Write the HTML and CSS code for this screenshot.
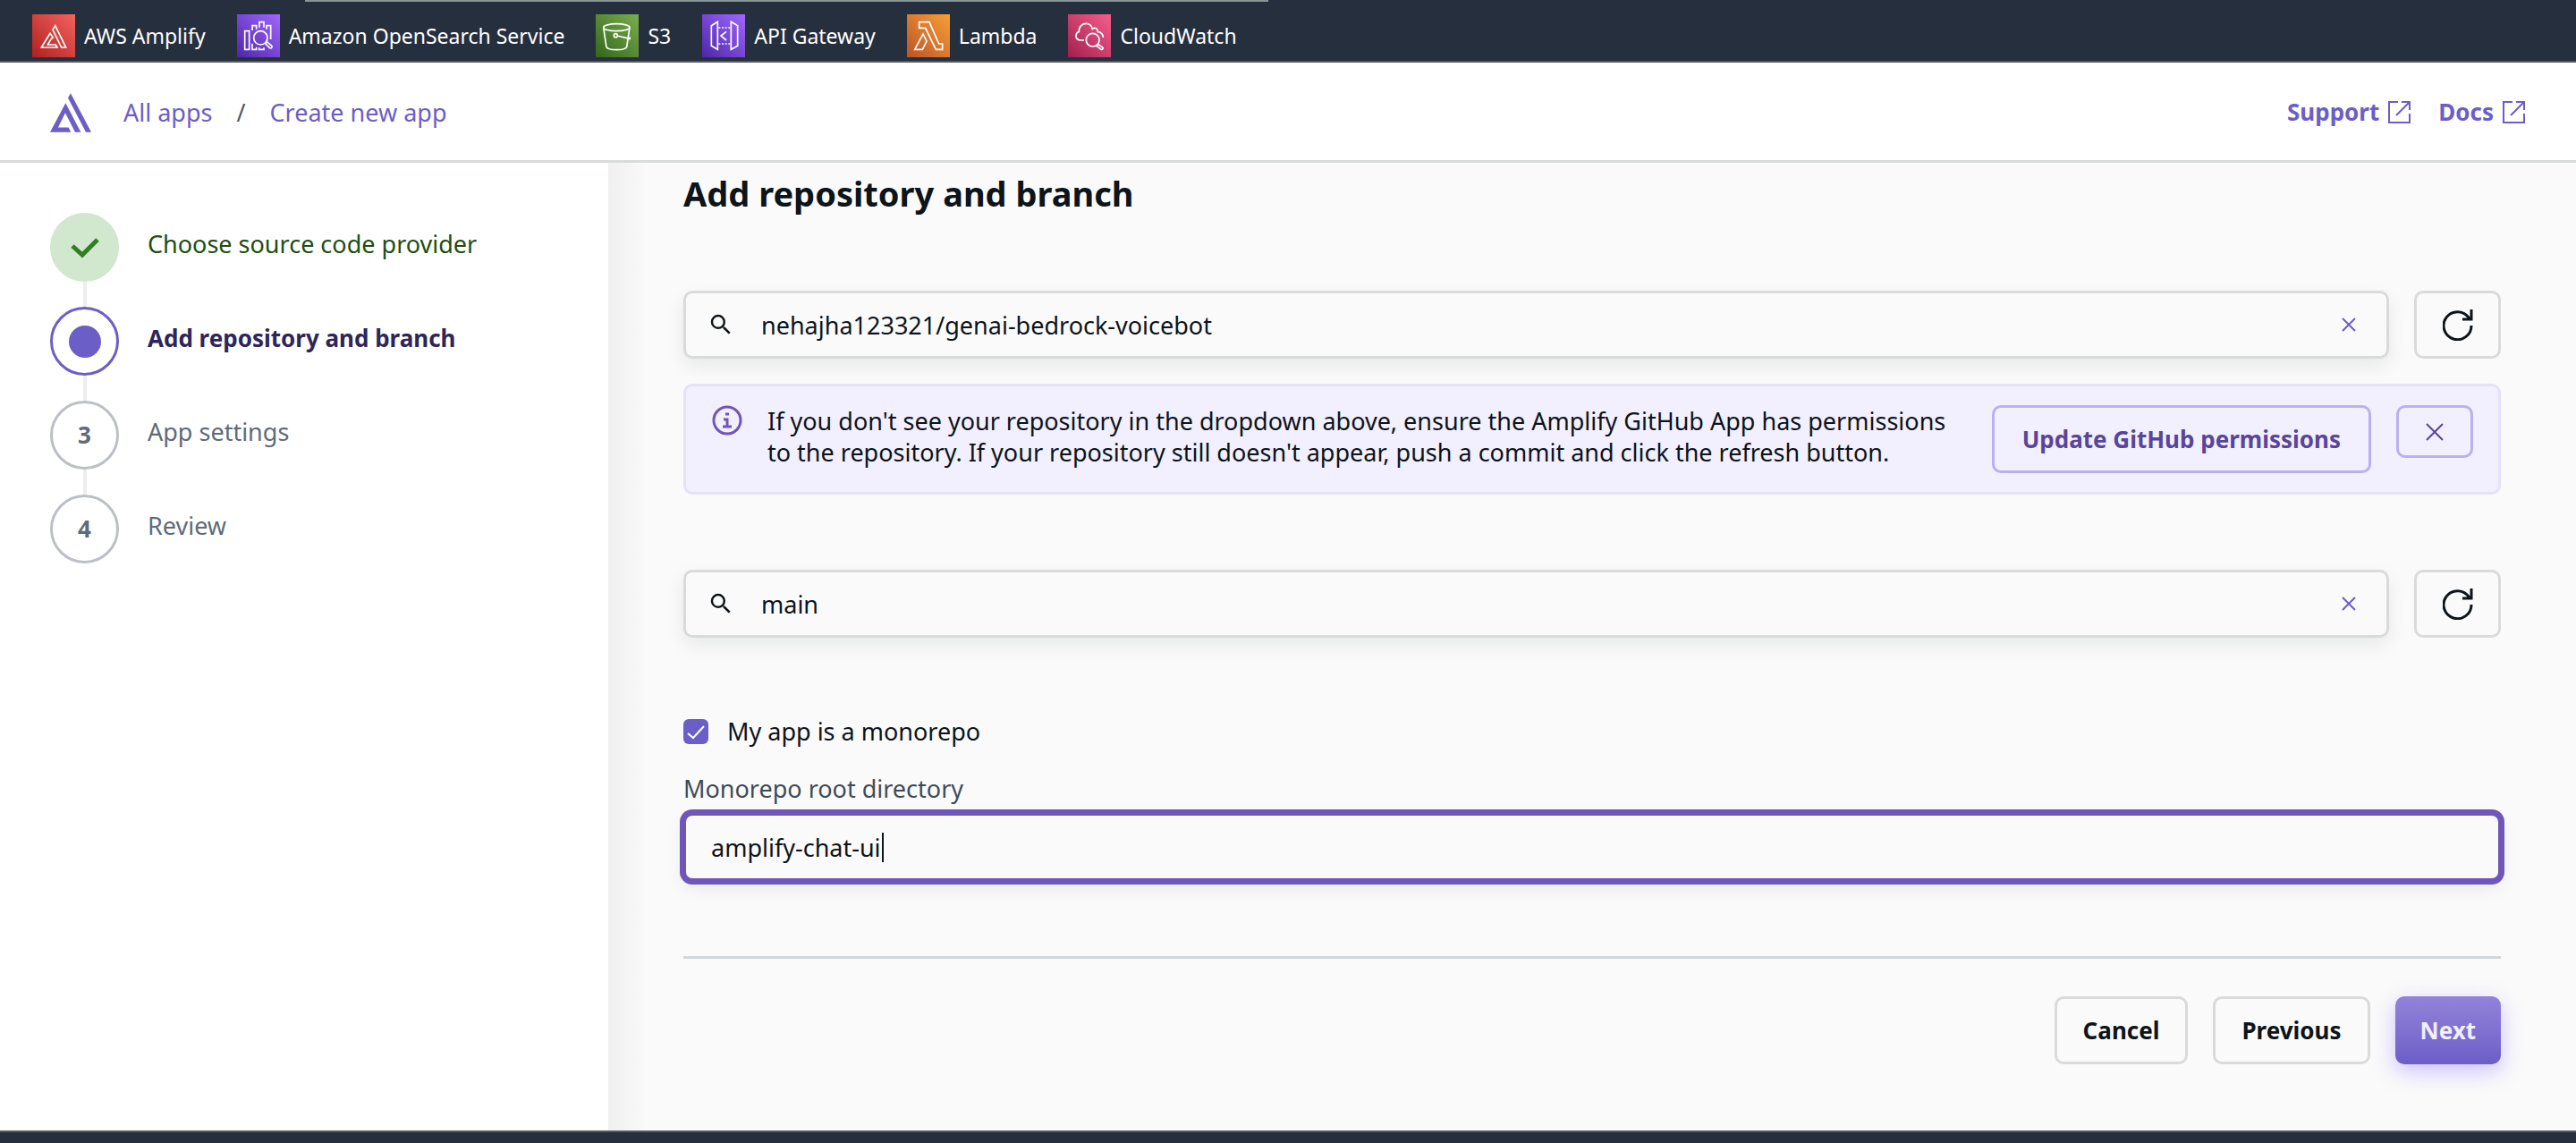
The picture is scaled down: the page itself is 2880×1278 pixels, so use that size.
FILE: index.html
```html
<!DOCTYPE html>
<html lang="en">
<head>
<meta charset="utf-8">
<title>Create new app</title>
<meta name="viewport" content="width=device-width, initial-scale=1">
<link rel="stylesheet" href="styles.css">
</head>
<body>
<nav class="services" aria-label="Favorite services">
  <span class="services-edge"></span>
  <a class="service" href="#">
    <svg class="service-icon red" viewBox="0 0 144 144"><path d="M77 38L113 111H98L69 52Z"/><path d="M31 111L60 64L70 78L64 82L52 102H79L84 111Z"/></svg>
    AWS Amplify
  </a>
  <a class="service" href="#">
    <svg class="service-icon purple" viewBox="0 0 144 144"><path d="M26 56H41V118H26ZM51 54V38H65V50M75 44V26H90V44M99 50V38H113V84M51 98V118H65V110M74 112V118H90V112"/><circle cx="79" cy="79" r="23"/><path d="M95 98L100 92L116 105Q119 109 116 112T109 112Z"/></svg>
    Amazon OpenSearch Service
  </a>
  <a class="service" href="#">
    <svg class="service-icon green" viewBox="0 0 144 144"><ellipse cx="70" cy="44" rx="44" ry="12"/><path d="M26 44L36 110C42 122 98 122 104 110L114 44M73 72L114 82"/><circle cx="67" cy="71" r="6"/><path d="M108 79L117 82" stroke-width="8"/></svg>
    S3
  </a>
  <a class="service" href="#">
    <svg class="service-icon purple" viewBox="0 0 144 144"><path d="M31 38L52 25V118L31 106ZM119 38L97 25V118L119 106ZM81 58L63 72L81 87"/><path d="M55 45H95M55 99H95" stroke-dasharray="6 5"/></svg>
    API Gateway
  </a>
  <a class="service" href="#">
    <svg class="service-icon orange" viewBox="0 0 144 144"><path d="M41 26H75L107 99H119V118H97L62 46H41ZM26 118L54 66L66 90L52 118Z"/></svg>
    Lambda
  </a>
  <a class="service" href="#">
    <svg class="service-icon pink" viewBox="0 0 144 144"><path d="M54 87H44C31 87 26 79 27 71C28 63 33 59 37 58C36 40 49 31 61 31C72 31 79 38 82 49C89 43 99 46 100 58C111 60 118 67 118 78"/><circle cx="83" cy="86" r="22"/><path d="M96 106L101 100L117 112Q119 115 116 117T111 118Z"/></svg>
    CloudWatch
  </a>
</nav>

<header class="header">
  <a class="logo" href="#" aria-label="AWS Amplify home">
    <svg width="46" height="44" viewBox="108 309 138 131"><path d="M177 309L246 440H228L168 325ZM160 342L211 440H192L159 375L135 424H170L178 440H108Z"/></svg>
  </a>
  <nav class="crumbs" aria-label="Breadcrumb">
    <a href="#">All apps</a>
    <span class="slash">/</span>
    <a href="#">Create new app</a>
  </nav>
  <div class="help">
    <a href="#">Support <svg class="external" viewBox="0 0 25 25"><path d="M11 1H1V24H24V14M15 1H24V10M9 16L24 1"/></svg></a>
    <a href="#">Docs <svg class="external" viewBox="0 0 25 25"><path d="M11 1H1V24H24V14M15 1H24V10M9 16L24 1"/></svg></a>
  </div>
</header>

<div class="body">
  <aside class="sidebar">
    <ol class="steps">
      <li class="step done">
        <span class="marker"><svg width="32" height="24" viewBox="0 0 32 24"><path d="M2 10L13 20L30 3"/></svg></span>
        <span class="step-label">Choose source code provider</span>
      </li>
      <li class="step current" aria-current="step">
        <span class="marker"><span class="dot"></span></span>
        <span class="step-label">Add repository and branch</span>
      </li>
      <li class="step">
        <span class="marker">3</span>
        <span class="step-label">App settings</span>
      </li>
      <li class="step">
        <span class="marker">4</span>
        <span class="step-label">Review</span>
      </li>
    </ol>
  </aside>

  <main class="main">
    <h1>Add repository and branch</h1>
    <form>
      <div class="picker">
        <div class="search">
          <svg class="search-icon" viewBox="0 0 24 24"><path d="M15.5 14h-.79l-.28-.27A6.47 6.47 0 0 0 16 9.500 6.500 6.500 0 1 0 9.500 16c1.610 0 3.090-.59 4.230-1.570l.27.28v.79l5 4.990L20.490 19l-4.990-5zm-6 0C7.010 14 5 11.990 5 9.500S7.010 5 9.500 5 14 7.010 14 9.500 11.990 14 9.500 14z"/></svg>
          <input type="text" aria-label="Repository" value="nehajha123321/genai-bedrock-voicebot">
          <button type="button" class="clear" aria-label="Clear repository"><svg width="16" height="16" viewBox="0 0 16 16"><path d="M1 1L15 15M15 1L1 15"/></svg></button>
        </div>
        <button type="button" class="button refresh" aria-label="Refresh repositories"><svg width="34" height="35" viewBox="0 0 34 35"><path d="M32 18A15.500 15.500 0 1 1 29 9L31 11M32 0V11H22"/></svg></button>
      </div>

      <div class="alert" role="status">
        <svg class="info" viewBox="0 0 34 34"><circle cx="17" cy="17" r="15"/><path d="M15 10H19M13 16H17V24M12 24H22"/></svg>
        <p>If you don't see your repository in the dropdown above, ensure the Amplify GitHub App has permissions to the repository. If your repository still doesn't appear, push a commit and click the refresh button.</p>
        <button type="button" class="button tinted">Update GitHub permissions</button>
        <button type="button" class="button tinted dismiss" aria-label="Dismiss"><svg width="20" height="20" viewBox="0 0 20 20"><path d="M1 1L19 19M19 1L1 19"/></svg></button>
      </div>

      <div class="picker branch">
        <div class="search">
          <svg class="search-icon" viewBox="0 0 24 24"><path d="M15.5 14h-.79l-.28-.27A6.47 6.47 0 0 0 16 9.500 6.500 6.500 0 1 0 9.500 16c1.610 0 3.090-.59 4.230-1.570l.27.28v.79l5 4.990L20.490 19l-4.990-5zm-6 0C7.010 14 5 11.990 5 9.500S7.010 5 9.500 5 14 7.010 14 9.500 11.990 14 9.500 14z"/></svg>
          <input type="text" aria-label="Branch" value="main">
          <button type="button" class="clear" aria-label="Clear branch"><svg width="16" height="16" viewBox="0 0 16 16"><path d="M1 1L15 15M15 1L1 15"/></svg></button>
        </div>
        <button type="button" class="button refresh" aria-label="Refresh branches"><svg width="34" height="35" viewBox="0 0 34 35"><path d="M32 18A15.500 15.500 0 1 1 29 9L31 11M32 0V11H22"/></svg></button>
      </div>

      <label class="check">
        <span class="check-box">
          <input type="checkbox" checked>
          <svg viewBox="0 0 28 28"><path d="M5 16L11 21L23 8"/></svg>
        </span>
        My app is a monorepo
      </label>

      <label class="field-label" for="root-dir">Monorepo root directory</label>
      <input class="text-field" id="root-dir" type="text" value="amplify-chat-ui" autofocus>

      <div class="actions">
        <button type="button" class="button">Cancel</button>
        <button type="button" class="button">Previous</button>
        <button type="submit" class="button primary">Next</button>
      </div>
    </form>
  </main>
</div>
<footer class="footer"></footer>
<script src="focus.js"></script>
</body>
</html>
```
FILE: focus.js
```js
const field = document.getElementById("root-dir");
field.focus();
field.setSelectionRange(field.value.length, field.value.length);
```
FILE: styles.css
```css
* { box-sizing: border-box; }

body {
  margin: 0;
  min-height: 100vh;
  display: flex;
  flex-direction: column;
  background: #fafafa;
  color: #0d141a;
  font: 27px/35px "Noto Sans", sans-serif;
}

a { color: inherit; text-decoration: none; }
svg { display: block; flex: none; }
button, input { font: inherit; color: inherit; }

/* Service shortcuts */
.services {
  position: relative;
  display: flex;
  gap: 35px;
  height: 70px;
  padding: 16px 36px 4px;
  background: #262f3d;
  border-bottom: 2px solid #545b64;
  color: #fff;
  font-size: 23px;
}
.services-edge {
  position: absolute;
  top: 0;
  left: 341px;
  width: 1077px;
  height: 2px;
  background: #879596;
}
.service { display: flex; align-items: center; gap: 10px; white-space: nowrap; }
.service-icon { width: 48px; height: 48px; fill: none; stroke: #fff; stroke-width: 5; }
.red { background: linear-gradient(45deg, #b0201f, #f4635e); }
.purple { background: linear-gradient(45deg, #4d27a8, #a166ff); }
.green { background: linear-gradient(45deg, #33661b, #7aae4e); }
.orange { background: linear-gradient(45deg, #bc5429, #f79f35); }
.pink { background: linear-gradient(45deg, #a0204e, #f65e8d); }

/* Header */
.header {
  display: flex;
  align-items: center;
  height: 112px;
  padding: 2px 57px 0 56px;
  background: #fff;
  border-bottom: 3px solid #d9dbdb;
  color: #6c5ec7;
}
.logo { margin-right: 36px; fill: #6c5ec7; }
.crumbs { display: flex; gap: 27px; }
.slash { color: #545b64; }
.help { display: flex; gap: 31px; margin-left: auto; font-weight: 700; font-size: 26px; }
.help a { display: flex; align-items: center; gap: 10px; }
.external { width: 25px; height: 25px; fill: none; stroke: #6c5ec7; stroke-width: 2; }

.body { flex: 1; display: flex; }

/* Wizard steps */
.sidebar { flex: none; width: 680px; padding: 56px; background: #fff; }
.steps { display: flex; flex-direction: column; gap: 28px; margin: 0; padding: 0; list-style: none; }
.step { position: relative; display: flex; gap: 32px; color: #5f6b7a; }
.step:not(:last-child)::after {
  content: "";
  position: absolute;
  top: 100%;
  left: 37px;
  width: 4px;
  height: 28px;
  background: #eee;
}
.marker {
  display: flex;
  align-items: center;
  justify-content: center;
  width: 77px;
  height: 77px;
  border: 3px solid #bcc0c6;
  border-radius: 50%;
  font-size: 26px;
  font-weight: 700;
}
.step-label { line-height: 70px; }
.done { color: #214e10; }
.done .marker { background: #d1e8cf; border-color: #d1e8cf; }
.done .marker svg { fill: none; stroke: #347d24; stroke-width: 5; }
.current { color: #2f2558; font-size: 26px; font-weight: 700; }
.current .marker { border-color: #6c5ec7; }
.dot { width: 36px; height: 36px; border-radius: 50%; background: #6c5ec7; }

/* Form */
.main {
  flex: 1;
  min-width: 0;
  padding: 12px 84px 74px;
  background: linear-gradient(90deg, #f0f0f0, #fafafa 44px);
}
h1 { margin: 0 0 87px; font-size: 38px; line-height: 44px; }

.picker { display: flex; gap: 28px; }
.branch { margin-top: 84px; }
.search {
  flex: 1;
  display: flex;
  align-items: center;
  height: 76px;
  padding: 0 34px 0 24px;
  border: 3px solid #d9dbdb;
  border-radius: 10px;
  background: #fafafa;
  box-shadow: 0 8px 20px rgba(13, 20, 26, .08);
}
.search input { flex: 1; min-width: 0; padding: 0 30px; border: 0; outline: 0; background: none; }
.search-icon { width: 30px; height: 30px; fill: #0d141a; }
.clear { padding: 0; border: 0; background: none; }
.clear svg { fill: none; stroke: #6c5ec7; stroke-width: 2; }

.button {
  display: flex;
  align-items: center;
  justify-content: center;
  flex: none;
  height: 76px;
  padding: 0 29px;
  border: 3px solid #d9dbdb;
  border-radius: 10px;
  background: #fafafa;
  font-size: 26px;
  font-weight: 700;
}
.refresh { width: 97px; }
.refresh svg { fill: none; stroke: #0d141a; stroke-width: 3; }

.alert {
  display: flex;
  gap: 28px;
  margin-top: 28px;
  padding: 21px 28px 21px 29px;
  border: 3px solid #e6e1fb;
  border-radius: 10px;
  background: #f2effe;
}
.alert p { flex: 1; margin: 0; max-width: 1340px; }
.info { width: 34px; height: 34px; fill: none; stroke: #6f56b9; stroke-width: 3; }
.tinted { margin-left: auto; padding: 0 31px; border-color: #bbb0f0; background: #f2effe; color: #594599; }
.dismiss { width: 86px; height: 59px; margin-left: 0; }
.dismiss svg { fill: none; stroke: #594599; stroke-width: 2; }

.check { display: flex; align-items: center; gap: 21px; margin-top: 84px; line-height: 42px; }
.check-box { display: grid; width: 28px; height: 28px; }
.check-box > * { grid-area: 1 / 1; }
.check-box input {
  appearance: none;
  width: 28px;
  height: 28px;
  margin: 0;
  border-radius: 6px;
}
.check-box input:checked { background: #6c5ec7; }
.check-box svg { fill: none; stroke: #fff; stroke-width: 2; pointer-events: none; }

.field-label { display: block; margin: 22px 0 6px; line-height: 42px; color: #3f4b5b; }
.text-field {
  display: block;
  width: 100%;
  height: 76px;
  padding: 0 28px;
  border: 3px solid #d9dbdb;
  border-radius: 10px;
  outline: 0;
  background: #fafafa;
}
.text-field:focus {
  border-color: #6f56b9;
  background: #fafafa linear-gradient(#0d141a, #0d141a) 219px 50% / 2px 33px no-repeat;
  box-shadow: 0 0 0 4px #6f56b9, 0 8px 20px rgba(13, 20, 26, .08);
  caret-color: transparent;
}

.actions {
  display: flex;
  justify-content: flex-end;
  gap: 28px;
  margin-top: 84px;
  padding-top: 42px;
  border-top: 3px solid #d3d7db;
}
.primary {
  padding: 0 28px;
  border: 0;
  background: linear-gradient(#9383da, #6c5ec7);
  box-shadow: 0 8px 24px rgba(150, 125, 255, .45);
  color: #f2effe;
}

.footer { height: 14px; background: #262f3d; border-top: 2px solid #545b64; }
```
